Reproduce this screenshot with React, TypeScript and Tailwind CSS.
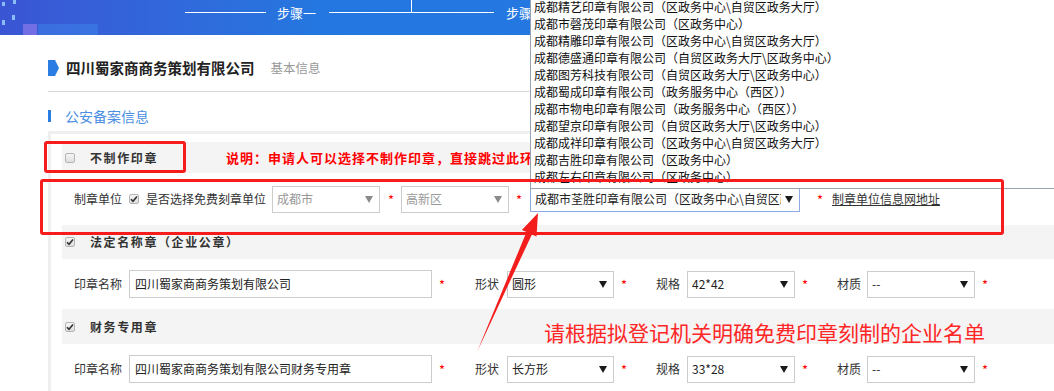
import React from "react";

const shops = [
  "成都精艺印章有限公司（区政务中心\\自贸区政务大厅）",
  "成都市磬茂印章有限公司（区政务中心）",
  "成都精雕印章有限公司（区政务中心\\自贸区政务大厅）",
  "成都德盛通印章有限公司（自贸区政务大厅\\区政务中心）",
  "成都图芳科技有限公司（自贸区政务大厅\\区政务中心）",
  "成都蜀成印章有限公司（政务服务中心（西区））",
  "成都市物电印章有限公司（政务服务中心（西区））",
  "成都望京印章有限公司（自贸区政务大厅\\区政务中心）",
  "成都成祥印章有限公司（区政务中心\\自贸区政务大厅）",
  "成都吉胜印章有限公司（区政务中心）",
  "成都左右印章有限公司（区政务中心）",
];

function Checkbox({ checked }: { checked?: boolean }) {
  return (
    <span className="flex h-[10px] w-[10px] shrink-0 items-center justify-center rounded-[2px] border border-[#b5b5b5] bg-gradient-to-b from-[#f6f6f6] to-[#dedede]">
      {checked && (
        <svg width="8" height="8" viewBox="0 0 8 8">
          <path d="M1 4.2 L3 6.3 L7 1.5" stroke="#333" strokeWidth="1.6" fill="none" />
        </svg>
      )}
    </span>
  );
}

function Arrow({ color = "#222" }: { color?: string }) {
  return (
    <svg width="8" height="7" viewBox="0 0 8 7" className="shrink-0">
      <path d="M0 0 H8 L4 7 Z" fill={color} />
    </svg>
  );
}

function Select({
  value,
  width,
  muted,
  focused,
}: {
  value: string;
  width: string;
  muted?: boolean;
  focused?: boolean;
}) {
  return (
    <div
      className={`flex shrink-0 items-center bg-white pl-[4px] pr-[6px] text-[12px] ${width} ${
        focused
          ? "h-[26px] border border-[#8cabe0]"
          : "h-[27px] border border-[#cccccc]"
      } ${muted ? "text-[#999]" : "text-[#222]"}`}
    >
      <span className="min-w-0 flex-1 overflow-hidden whitespace-nowrap">{value}</span>
      <span className="ml-[4px] flex">
        <Arrow color={muted ? "#8a8a8a" : "#1a1a1a"} />
      </span>
    </div>
  );
}

function Star({ ml }: { ml: string }) {
  return <span className={`${ml} w-[7px] shrink-0 text-[13px] leading-none text-[#f00]`}>*</span>;
}

function SealRow({
  name,
  shape,
  size,
}: {
  name: string;
  shape: string;
  size: string;
}) {
  return (
    <div className="flex h-[50px] items-center pl-[12px] text-[12px] text-[#333]">
      <span className="w-[47px] shrink-0 whitespace-nowrap">印章名称</span>
      <div className="ml-[8px] flex h-[28px] w-[303px] shrink-0 items-center border border-[#cccccc] pl-[5px] text-[#222]">
        {name}
      </div>
      <Star ml="ml-[7px]" />
      <span className="ml-[29px] w-[24px] shrink-0 whitespace-nowrap">形状</span>
      <div className="ml-[8px]">
        <Select value={shape} width="w-[107px]" />
      </div>
      <Star ml="ml-[7px]" />
      <span className="ml-[28px] w-[24px] shrink-0 whitespace-nowrap">规格</span>
      <div className="ml-[7px]">
        <Select value={size} width="w-[108px]" />
      </div>
      <Star ml="ml-[7px]" />
      <span className="ml-[28px] w-[24px] shrink-0 whitespace-nowrap">材质</span>
      <div className="ml-[6px]">
        <Select value="--" width="w-[108px]" />
      </div>
      <Star ml="ml-[7px]" />
    </div>
  );
}

function GroupHeader({
  title,
  checked,
  height,
  children,
}: {
  title: string;
  checked?: boolean;
  height: string;
  children?: React.ReactNode;
}) {
  return (
    <div className={`flex items-center bg-[#f4f4f4] pl-[3px] ${height}`}>
      <Checkbox checked={checked} />
      <span className="ml-[15px] whitespace-nowrap text-[12px] font-bold tracking-[1.6px] text-[#333]">
        {title}
      </span>
      {children}
    </div>
  );
}

export default function App() {
  return (
    <div className="relative h-[391px] w-[1054px] overflow-hidden bg-white font-['Noto_Sans_CJK_SC','Microsoft_YaHei',sans-serif]">
      {/* step bar */}
      <div className="relative h-[35px] bg-gradient-to-r from-[#3a55d4] via-[#2477e0] via-30% to-[#2479e1]">
        <div className="absolute left-[2px] top-[2px] h-[4px] w-[3px] bg-[#9fd6ff]/80" />
        <div className="absolute left-[13px] top-0 h-[4px] w-[3px] bg-[#9fd6ff]/80" />
        <div className="absolute left-[2px] top-[20px] h-[5px] w-[3px] bg-[#9fd6ff]/80" />
        <div className="absolute left-[12px] top-[15px] h-[5px] w-[3px] bg-[#9fd6ff]/80" />
        <div className="absolute left-[23px] top-[24px] h-[11px] w-[14px] bg-[#8a78e8]/70" />
        <div className="absolute left-[38px] top-[24px] h-[11px] w-[60px] bg-[#3f8ef0]/40" />
        <div className="flex h-[24px] items-center pl-[185px] text-[13px] text-white">
          <div className="h-px w-[81px] bg-white" />
          <span className="ml-[11px] whitespace-nowrap leading-none">步骤一</span>
          <div className="relative ml-[13px] h-px w-[165px] bg-white">
            <div className="absolute left-[82px] top-[-12px] h-[12px] w-px bg-white" />
          </div>
          <span className="ml-[12px] whitespace-nowrap leading-none">步骤二</span>
        </div>
      </div>

      <div className="pl-[48px]">
        {/* title */}
        <div className="mt-[23px] flex h-[20px] items-center">
          <svg width="11" height="16" viewBox="0 0 11 16">
            <path d="M0 0 H7 L11 8 L7 16 H0 Z" fill="#2a7de2" />
          </svg>
          <span className="ml-[7px] whitespace-nowrap text-[14.5px] font-bold text-[#222]">
            四川蜀家商商务策划有限公司
          </span>
          <span className="ml-[16px] whitespace-nowrap text-[12.5px] text-[#999]">基本信息</span>
        </div>
        <div className="mt-[13px] h-px bg-[#d6d6d6]" />

        {/* section */}
        <div className="mt-[17px] flex h-[14px] items-center">
          <div className="h-[12px] w-[3px] bg-[#2a7de2]" />
          <span className="ml-[14px] whitespace-nowrap text-[14px] text-[#4b8fe2]">公安备案信息</span>
        </div>

        <div className="mt-[8px] border-l-[3px] border-t-[3px] border-[#efefef] pl-[11px] pt-[8px]">
          <GroupHeader title="不制作印章" height="h-[31px]">
            <span className="ml-[68px] whitespace-nowrap text-[13px] font-bold tracking-[1px] text-[#f00]">
              说明：申请人可以选择不制作印章，直接跳过此环节
            </span>
          </GroupHeader>

          <div className="flex h-[52px] items-center pl-[12px] text-[12px] text-[#333]">
            <span className="w-[47px] shrink-0 whitespace-nowrap">制章单位</span>
            <span className="ml-[8px]">
              <Checkbox checked />
            </span>
            <span className="ml-[7px] w-[119px] shrink-0 whitespace-nowrap">是否选择免费刻章单位</span>
            <div className="ml-[7px]">
              <Select value="成都市" width="w-[108px]" muted />
            </div>
            <Star ml="ml-[8px]" />
            <div className="ml-[6px]">
              <Select value="高新区" width="w-[108px]" muted />
            </div>
            <Star ml="ml-[7px]" />
            <div className="ml-[7px]">
              <Select value="成都市荃胜印章有限公司（区政务中心\自贸区政务大厅）" width="w-[270px]" focused />
            </div>
            <Star ml="ml-[17px]" />
            <a className="ml-[8px] whitespace-nowrap text-[#333] underline">制章单位信息网地址</a>
          </div>

          <GroupHeader title="法定名称章（企业公章）" checked height="h-[34px]" />
          <SealRow name="四川蜀家商商务策划有限公司" shape="圆形" size="42*42" />
          <GroupHeader title="财务专用章" checked height="h-[35px]" />
          <SealRow name="四川蜀家商商务策划有限公司财务专用章" shape="长方形" size="33*28" />
        </div>
      </div>

      {/* open dropdown list */}
      <div className="absolute left-[530px] top-[-2px] w-[540px] border border-t-0 border-[#9aa3b2] bg-white pb-[3px] pl-[3px] text-[12px] text-[#111]">
        {shops.map((s) => (
          <div key={s} className="h-[17px] whitespace-nowrap leading-[17px]">
            {s}
          </div>
        ))}
      </div>

      {/* annotations */}
      <div className="absolute left-[44px] top-[141px] h-[32px] w-[142px] rounded-[3px] border-[3px] border-[#f61c1c]" />
      <div className="absolute left-[40px] top-[179px] h-[56px] w-[964px] rounded-[3px] border-[3px] border-[#f61c1c]" />
      <svg className="pointer-events-none absolute left-0 top-0" width="1054" height="391">
        <path
          d="M477 352 L526.5 232 L521.9 230 L538 213 L536.5 236.4 L531.9 234.4 Z"
          fill="#f41d1d"
        />
      </svg>
      <div className="absolute left-[544px] top-[319px] whitespace-nowrap text-[21px] leading-[26px] text-[#ff2626]">
        请根据拟登记机关明确免费印章刻制的企业名单
      </div>
    </div>
  );
}
